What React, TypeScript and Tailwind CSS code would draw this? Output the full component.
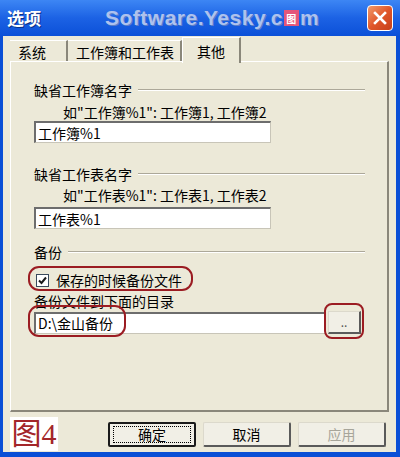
import React from 'react';

const font = { fontFamily: '"Noto Sans CJK SC", "Liberation Sans", sans-serif' };

const GroupHeading = ({ label }: { label: string }) => (
  <div className="flex items-center h-[18px] leading-[18px] pl-[23px] pr-[22px]">
    <span className="text-[14px] text-black">{label}</span>
    <div className="flex-1 ml-[6px] h-[2px] border-t border-t-[#aca899] border-b border-b-white" />
  </div>
);

const Field = ({ value, width }: { value: string; width: string }) => (
  <div
    className={`${width} h-[22px] bg-white border border-[#c8c5b8] border-t-[2px] border-t-[#6d6d6d] border-l-[2px] border-l-[#6d6d6d] flex items-center pl-[2px] text-[14px] leading-[18px] text-black`}
  >
    {value}
  </div>
);

const Tab = ({ label, active, w }: { label: string; active?: boolean; w: string }) =>
  active ? (
    <div
      className={`${w} h-[26px] -mb-[1px] z-10 bg-[#ece9d8] border-t border-l border-white border-r-2 border-r-[#8a877a] flex items-start justify-center pt-[4px] text-[14px] leading-[18px] text-black`}
    >
      {label}
    </div>
  ) : (
    <div
      className={`${w} h-[22px] mt-[3px] bg-[#ece9d8] border-t border-white border-r-2 border-r-[#8a877a] flex items-center pl-[8px] text-[14px] leading-[18px] text-black`}
    >
      {label}
    </div>
  );

const Button = ({ label, primary, disabled }: { label: string; primary?: boolean; disabled?: boolean }) => (
  <div
    className={`w-[88px] h-[25px] flex items-center justify-center text-[14px] leading-[18px] rounded-[2px] ${
      primary
        ? 'border-2 border-[#1a1a1a] bg-[#f1efe6]'
        : 'border border-[#dcd9cc] border-r-2 border-r-[#5a5a5a] border-b-2 border-b-[#5a5a5a] bg-[#f1efe6]'
    } ${disabled ? 'text-[#a7a59a]' : 'text-black'}`}
  >
    {primary ? (
      <div className="w-[78px] h-[17px] border border-dotted border-black flex items-center justify-center">{label}</div>
    ) : (
      label
    )}
  </div>
);

export default function App() {
  return (
    <div className="w-[400px] h-[457px] flex flex-col bg-[#0a4fd6]" style={font}>
      {/* title bar */}
      <div className="h-[36px] flex items-center pl-[7px] pr-[7px] bg-gradient-to-b from-[#3d86f4] via-[#1c62e4] to-[#0b50d8]">
        <span className="text-[17px] font-bold text-white [text-shadow:1px_1px_0_#0a2f86]">选项</span>
        <span
          className="ml-[64px] text-[21px] font-bold text-[#aec2ee] tracking-[0.5px] [text-shadow:1px_1px_0_#5d7fc8] flex items-center"
          style={{ fontFamily: '"Liberation Sans", Arial, sans-serif' }}
        >
          Software.Yesky.c
          <span className="inline-flex w-[15px] h-[16px] mx-[1px] bg-[#e4567a] text-[10px] text-white items-center justify-center [text-shadow:none]" style={font}>
            图
          </span>
          m
        </span>
        <div className="ml-auto w-[26px] h-[26px] rounded-[4px] border border-white bg-gradient-to-br from-[#f09a6a] via-[#e0562a] to-[#c6401a] flex items-center justify-center">
          <svg width="14" height="14" viewBox="0 0 14 14">
            <path d="M2 2 L12 12 M12 2 L2 12" stroke="white" strokeWidth="2.6" strokeLinecap="square" />
          </svg>
        </div>
      </div>

      {/* client area */}
      <div className="flex-1 mx-[3px] mb-[5px] mr-[4px] bg-[#ece9d8] flex flex-col">
        {/* tabs */}
        <div className="flex items-start pl-[7px] pt-[1px] h-[25px]">
          <Tab label="系统" w="w-[58px]" />
          <Tab label="工作簿和工作表" w="w-[114px]" />
          <Tab label="其他" active w="w-[59px]" />
        </div>

        {/* panel */}
        <div className="relative ml-[7px] w-[379px] h-[351px] border-t border-l border-white border-r-2 border-r-[#8a877a] border-b-2 border-b-[#8a877a] flex flex-col">
          <div className="mt-[19px]">
            <GroupHeading label="缺省工作簿名字" />
          </div>
          <div className="mt-[4px] pl-[52px] h-[18px] text-[14px] leading-[18px] text-black">
            如"工作簿%1": 工作簿1, 工作簿2
          </div>
          <div className="pl-[23px]">
            <Field value="工作簿%1" width="w-[237px]" />
          </div>

          <div className="mt-[22px]">
            <GroupHeading label="缺省工作表名字" />
          </div>
          <div className="mt-[3px] pl-[52px] h-[18px] text-[14px] leading-[18px] text-black">
            如"工作表%1": 工作表1, 工作表2
          </div>
          <div className="mt-[3px] pl-[23px]">
            <Field value="工作表%1" width="w-[237px]" />
          </div>

          <div className="mt-[14px]">
            <GroupHeading label="备份" />
          </div>

          <div className="mt-[10px] pl-[25px] flex items-center h-[18px]">
            <div className="w-[13px] h-[13px] bg-white border border-[#3a4a5c] flex items-center justify-center">
              <svg width="9" height="9" viewBox="0 0 9 9">
                <path d="M1 4.5 L3.5 7 L8 1.5" stroke="#1a1a1a" strokeWidth="2" fill="none" />
              </svg>
            </div>
            <span className="ml-[7px] text-[14px] leading-[18px] text-black">保存的时候备份文件</span>
          </div>
          <div className="mt-[3px] pl-[23px] h-[18px] text-[14px] leading-[18px] text-black">备份文件到下面的目录</div>
          <div className="mt-[1px] pl-[23px] flex items-center">
            <Field value="D:\金山备份" width="w-[292px]" />
            <div className="ml-[2px] w-[33px] h-[23px] bg-[#f1efe6] border border-[#dcd9cc] border-r-2 border-r-[#5a5a5a] border-b-2 border-b-[#5a5a5a] flex items-center justify-center text-[12px] leading-none text-[#555]">
              ..
            </div>
          </div>

          {/* red annotation marks */}
          <div className="absolute left-[17px] top-[204px] w-[165px] h-[25px] rounded-[11px] border-2 border-[#9b1c22]" />
          <div className="absolute left-[17px] top-[243px] w-[98px] h-[32px] rounded-[11px] border-2 border-[#9b1c22]" />
          <div className="absolute left-[313px] top-[241px] w-[40px] h-[36px] rounded-[8px] border-2 border-[#9b1c22]" />
        </div>

        {/* bottom buttons */}
        <div className="flex items-center mt-[5px] pl-[7px]">
          <div
            className="w-[48px] h-[34px] bg-white flex items-center justify-center text-[30px] leading-none text-[#a3262a]"
            style={{ fontFamily: '"Liberation Serif", "Noto Sans CJK SC", serif' }}
          >
            图4
          </div>
          <div className="ml-[50px] flex gap-[7px]">
            <Button label="确定" primary />
            <Button label="取消" />
            <Button label="应用" disabled />
          </div>
        </div>
      </div>
    </div>
  );
}
